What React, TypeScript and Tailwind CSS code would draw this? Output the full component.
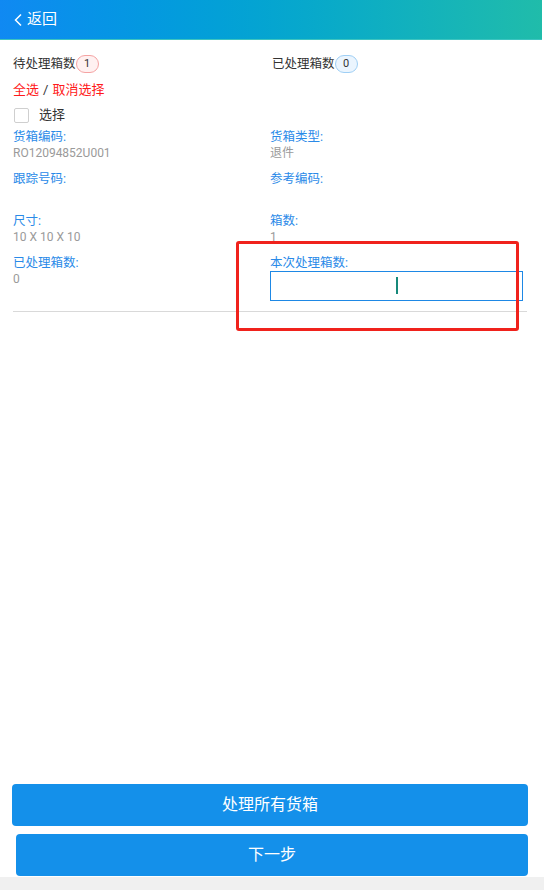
import React from "react";

const fields = [
  { label: "货箱编码:", value: "RO12094852U001" },
  { label: "货箱类型:", value: "退件" },
  { label: "跟踪号码:", value: "" },
  { label: "参考编码:", value: "" },
  { label: "尺寸:", value: "10 X 10 X 10" },
  { label: "箱数:", value: "1" },
  { label: "已处理箱数:", value: "0" },
];

export default function App() {
  return (
    <div
      className="relative flex min-h-[890px] w-[544px] flex-col bg-white text-[#333]"
      style={{ fontFamily: 'Roboto, "Noto Sans CJK SC", sans-serif' }}
    >
      <div className="w-[542px]">
        {/* Header */}
        <div className="flex h-10 items-center border-b border-[#3cc4c0] bg-gradient-to-r from-[#1089f2] to-[#20bcaa] pl-[13px] text-white">
          <svg width="11" height="14" viewBox="0 0 11 14" className="mr-[3px]">
            <polyline points="8,1.5 2.5,7 8,12.5" fill="none" stroke="white" strokeWidth="1.5" />
          </svg>
          <span className="text-[15px] leading-none">返回</span>
        </div>

        <div className="px-[13px]">
          {/* Counters */}
          <div className="mt-[14px] grid h-5 grid-cols-2 items-center text-[12.5px]">
            <div className="flex items-center">
              <span>待处理箱数</span>
              <span className="flex h-[18px] w-[23px] items-center justify-center rounded-full border border-[#f5a3a3] bg-[#fff1f1] text-[11px]">
                1
              </span>
            </div>
            <div className="flex items-center pl-px">
              <span>已处理箱数</span>
              <span className="flex h-[18px] w-[23px] items-center justify-center rounded-full border border-[#9fcff5] bg-[#ebf5fe] text-[11px]">
                0
              </span>
            </div>
          </div>

          <div className="mt-[6px] flex h-5 items-center text-[13px]">
            <span className="text-[#ff1a1a]">全选</span>
            <span className="mx-[4px] text-[#333]">/</span>
            <span className="text-[#ff1a1a]">取消选择</span>
          </div>

          <div className="mt-[5px] flex h-5 items-center pl-px text-[13px]">
            <span className="mr-[10px] h-[15px] w-[15px] rounded-[2px] border border-[#cfcfcf] bg-white" />
            <span>选择</span>
          </div>

          {/* Detail grid */}
          <div className="mt-[2.5px] grid grid-cols-[257px_1fr]">
            {fields.map((f) => (
              <div key={f.label} className="h-[42px]">
                <div className="h-[17px] text-[12.5px] leading-[17px] text-[#2a8ae8]">{f.label}</div>
                <div className="h-[17px] text-[12px] leading-[17px] text-[#9a9a9a]">{f.value}</div>
              </div>
            ))}
            <div>
              <div className="h-[17px] text-[12.5px] leading-[17px] text-[#2a8ae8]">本次处理箱数:</div>
              <div className="flex h-[30px] w-[253px] items-center justify-center border border-[#1e88e5]">
                <span className="h-[17px] w-[2px] bg-[#16897a]" />
              </div>
            </div>
          </div>

          <div className="mt-[10px] h-px w-[514px] bg-[#d9d9d9]" />
        </div>
      </div>

      <div className="flex-1" />

      {/* Buttons */}
      <div className="w-[542px]">
        <button className="ml-[12px] flex h-[42px] w-[516px] items-center justify-center rounded-[4px] bg-[#1490ea] text-[16px] text-white">
          处理所有货箱
        </button>
        <button className="ml-[16px] mt-[8px] flex h-[42px] w-[512px] items-center justify-center rounded-[4px] bg-[#1490ea] text-[16px] text-white">
          下一步
        </button>
      </div>
      <div className="mt-px h-[13px] w-full bg-[#f0f0f0]" />

      {/* Red annotation box */}
      <div className="absolute left-[236px] top-[241px] h-[90px] w-[283px] rounded-[3px] border-[3px] border-[#f0221c]" />
    </div>
  );
}
